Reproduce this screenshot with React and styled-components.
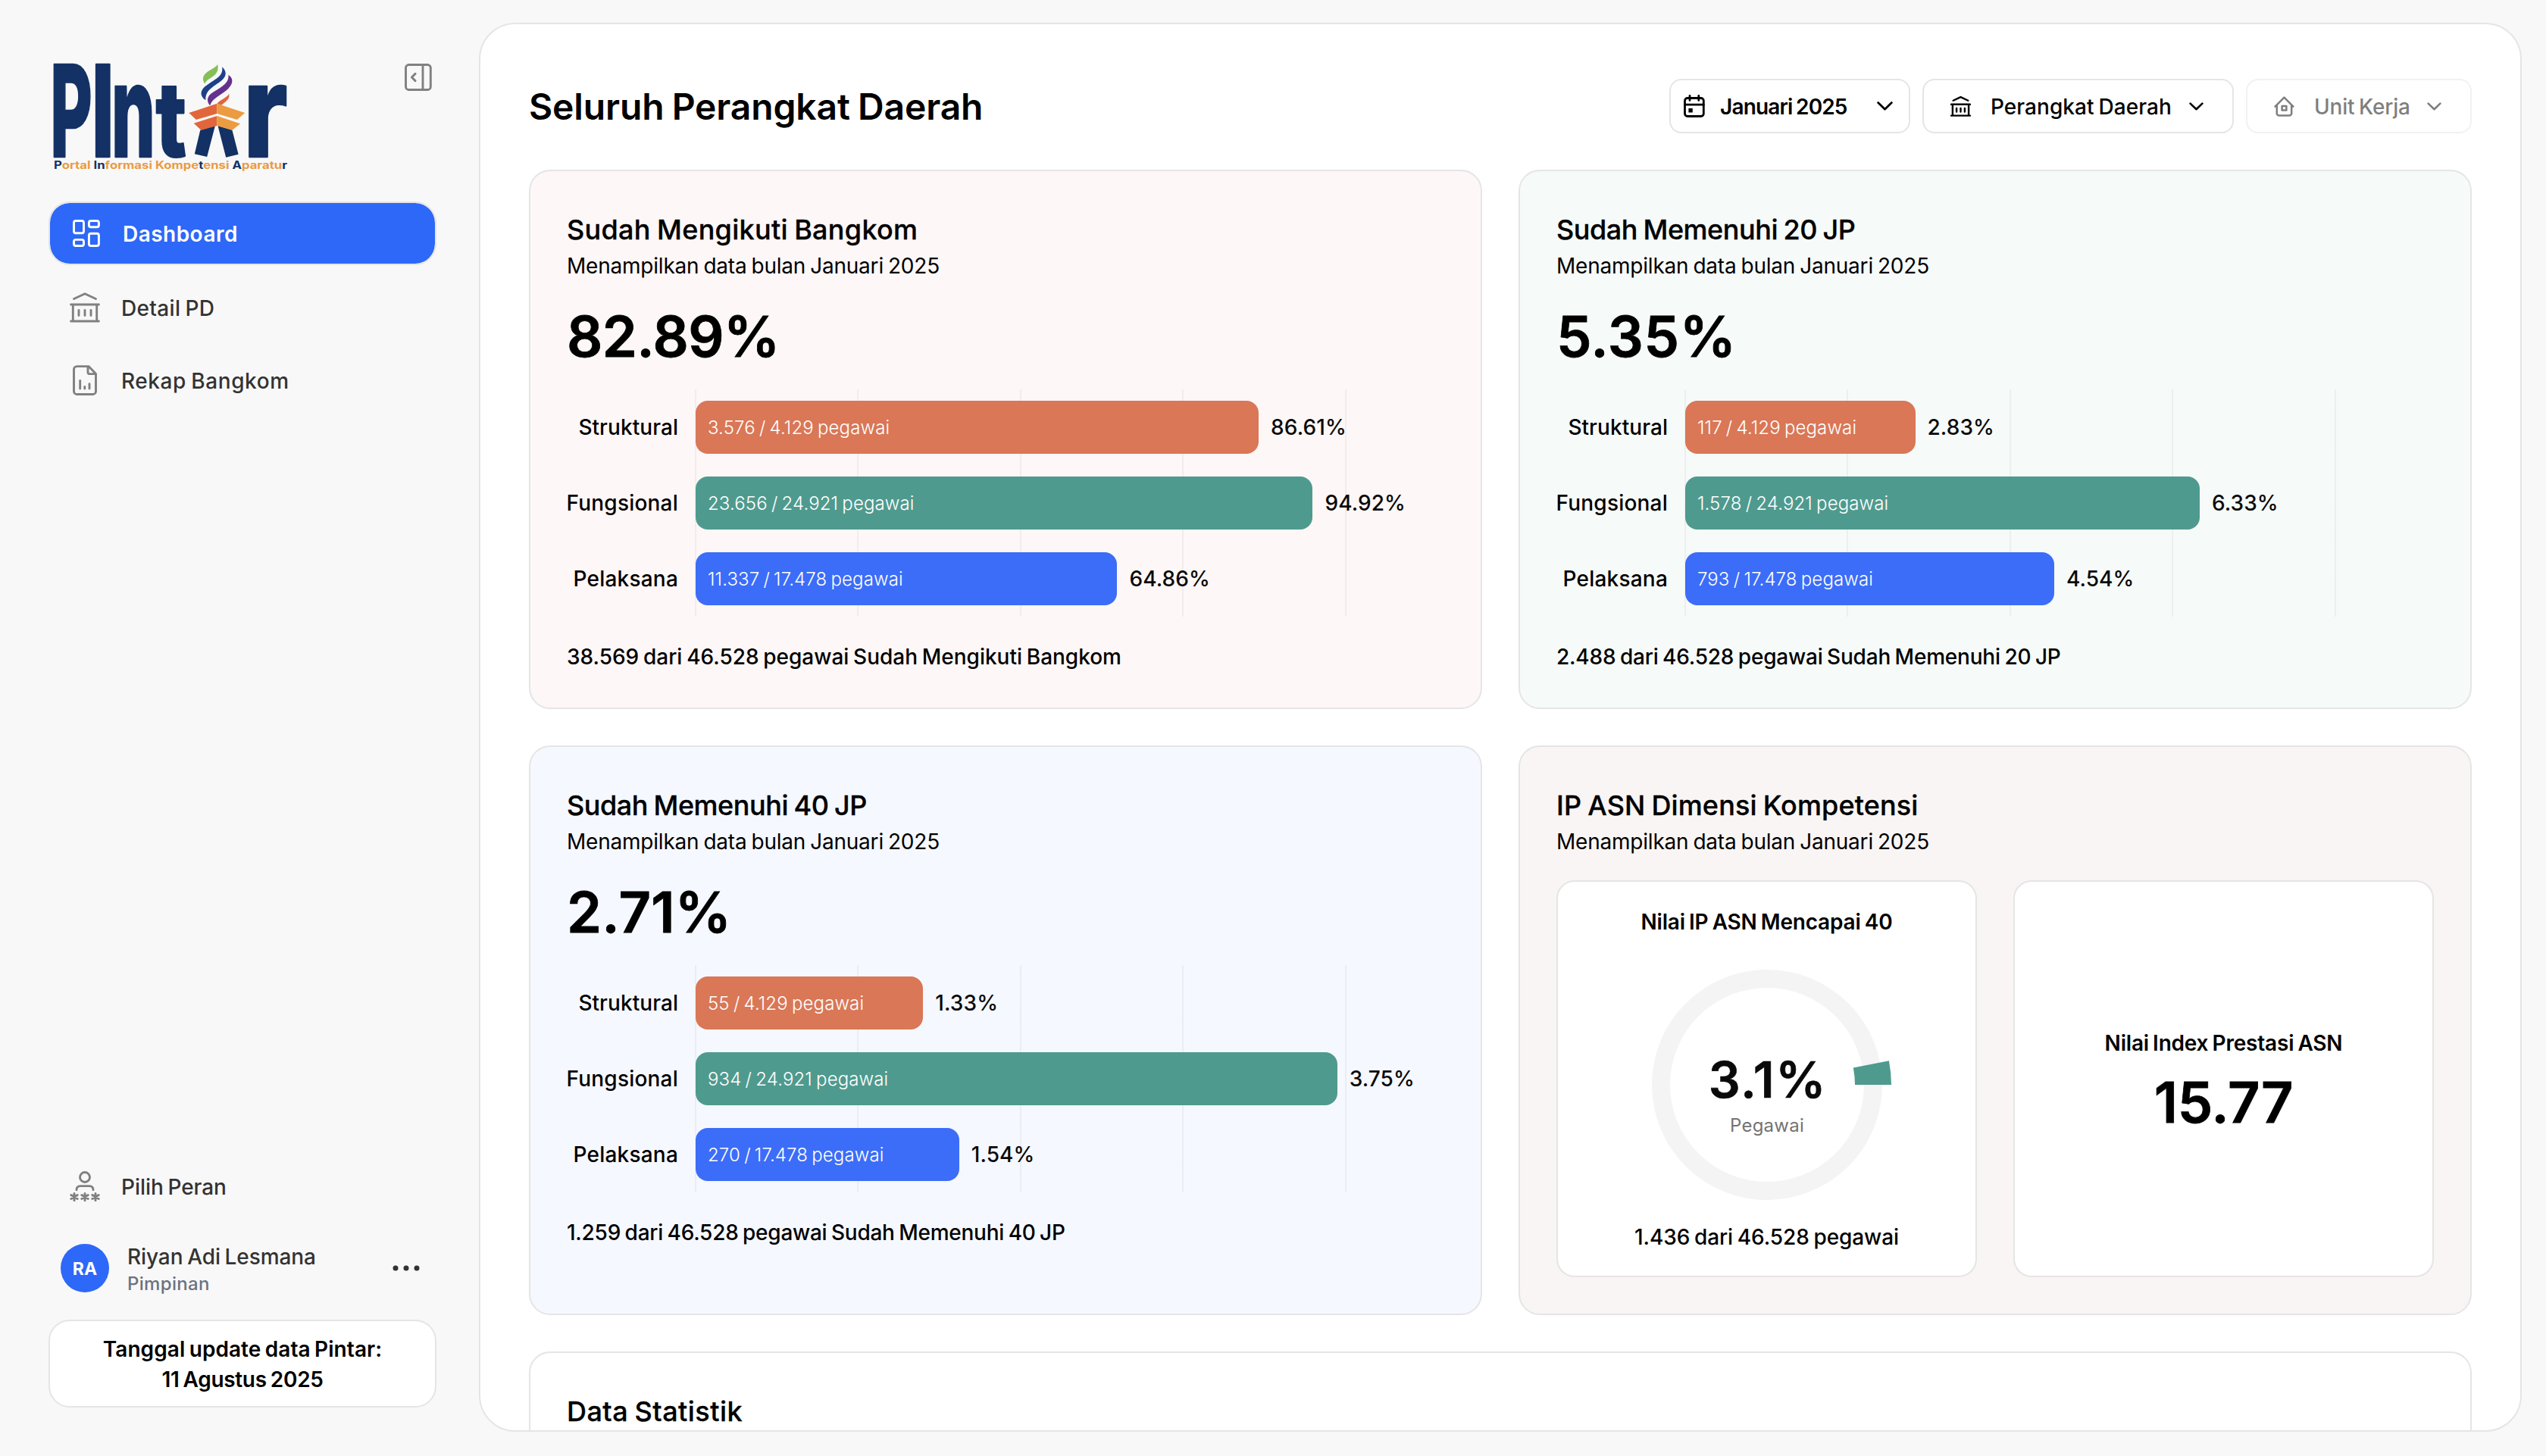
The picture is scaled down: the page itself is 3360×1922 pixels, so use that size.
import React from 'react';
import styled, { createGlobalStyle } from 'styled-components';

const GlobalStyle = createGlobalStyle`
  * { box-sizing: border-box; }
  body {
    margin: 0;
    background: #f8f8f8;
    color: #000;
    font-family: "Inter", "Liberation Sans", sans-serif;
    font-size: 28px;
    line-height: 40px;
    word-spacing: -0.06em;
    -webkit-font-smoothing: antialiased;
  }
`;

const line = '#e5e5e5';
const colors = { orange: '#d97757', green: '#4f9a8e', blue: '#3c6df8', primary: '#2d68f8' };

const Page = styled.div`
  display: flex;
  width: 3360px;
  height: 1922px;
  overflow: hidden;
  background: #f8f8f8;
`;

/* Sidebar */

const Sidebar = styled.aside`
  display: flex;
  flex-direction: column;
  width: 632px;
  flex: none;
  padding: 60px 56px 64px 64px;
`;

const Brand = styled.div`
  display: flex;
  justify-content: space-between;
  align-items: flex-start;
  height: 206px;
  padding-right: 6px;
`;

const CollapseButton = styled.button`
  display: flex;
  margin: 24px 0 0;
  padding: 0;
  border: 0;
  background: none;
  color: #808080;
`;

const Nav = styled.nav`
  display: flex;
  flex-direction: column;
  gap: 16px;
  flex: 1;
`;

const NavItem = styled.a`
  display: flex;
  align-items: center;
  gap: 28px;
  height: ${(p) => (p.$active ? 84 : 80)}px;
  padding: 0 28px;
  border-radius: 28px;
  border: ${(p) => (p.$active ? `2px solid ${line}` : '0')};
  background: ${(p) => (p.$active ? colors.primary : 'transparent')};
  background-clip: padding-box;
  color: ${(p) => (p.$active ? '#fff' : '#333')};
  font-weight: ${(p) => (p.$active ? 600 : 500)};
`;

const IconSlot = styled.span`
  display: flex;
  justify-content: center;
  width: 40px;
  color: ${(p) => (p.$active ? '#fff' : '#808080')};
`;

const Text = styled.span`
  white-space: nowrap;
  letter-spacing: ${(p) => p.$track || 0}em;
`;

const NavLabel = styled(Text)`
  padding-top: 2px;
`;

const UserRow = styled.div`
  display: flex;
  align-items: center;
  height: 64px;
  margin: 36px 0;
  padding: 0 22px 0 16px;
  color: #333;
`;

const Avatar = styled.div`
  display: flex;
  align-items: center;
  justify-content: center;
  width: 64px;
  height: 64px;
  padding-top: 2px;
  border-radius: 50%;
  background: ${colors.primary};
  color: #fff;
  font-size: 23px;
  font-weight: 700;
`;

const UserInfo = styled.div`
  display: flex;
  flex-direction: column;
  flex: 1;
  padding: 6px 0 0 24px;
  line-height: 36px;
  font-weight: 500;
`;

const Role = styled(Text)`
  font-size: 24px;
  color: #6b7280;
`;

const UpdateBox = styled.div`
  display: flex;
  flex-direction: column;
  align-items: center;
  height: 116px;
  padding-top: 17px;
  border: 2px solid ${line};
  border-radius: 28px;
  background: #fff;
  font-weight: 600;
`;

/* Main panel */

const Main = styled.main`
  display: flex;
  flex-direction: column;
  flex: 1;
  gap: 48px;
  margin: 30px 32px 32px 0;
  padding: 72px 64px 0;
  border: 2px solid ${line};
  border-radius: 48px;
  background: #fff;
  overflow: hidden;
`;

const Header = styled.header`
  display: flex;
  align-items: center;
  justify-content: space-between;
  height: 72px;
  flex: none;
`;

const PageTitle = styled.h1`
  margin: 0;
  padding-top: 2px;
  font-size: 48px;
  line-height: 60px;
  font-weight: 600;
`;

const Filters = styled.div`
  display: flex;
  gap: 16px;
`;

const FilterButton = styled.button`
  display: flex;
  align-items: center;
  width: ${(p) => p.$width}px;
  height: 72px;
  padding: 0 ${(p) => p.$end}px 0 ${(p) => p.$start}px;
  border: 2px solid ${line};
  border-radius: 16px;
  background: #fff;
  color: #000;
  font: inherit;
  font-weight: ${(p) => p.$weight || 500};
  word-spacing: inherit;
  opacity: ${(p) => (p.disabled ? 0.5 : 1)};
`;

const FilterLabel = styled(Text)`
  flex: 1;
  text-align: left;
  padding: 1px 0 0 ${(p) => p.$gap}px;
`;

const CardGrid = styled.section`
  display: grid;
  grid-template-columns: 1fr 1fr;
  gap: 48px;
  flex: none;
`;

const Card = styled.article`
  display: flex;
  flex-direction: column;
  padding: 48px;
  border: 2px solid ${line};
  border-radius: 28px;
  background: ${(p) => p.$tint || '#fff'};
`;

const StatCard = styled(Card)`
  height: 300px;
  flex: none;
`;

const CardTitle = styled.h2`
  margin: 0;
  padding-top: 1px;
  font-size: 36px;
  line-height: 56px;
  font-weight: 500;
  -webkit-text-stroke: 0.3px #000;
`;

const BigValue = styled.div`
  margin: 28px 0 25px;
  font-size: 74px;
  line-height: 90px;
  font-weight: 600;
  -webkit-text-stroke: 0.8px #000;
`;

const Chart = styled.div`
  display: flex;
  flex-direction: column;
  margin-left: 169px;
  width: 862px;
  background: repeating-linear-gradient(90deg, rgba(0, 0, 0, 0.045) 0 2px, transparent 2px 214.5px);
`;

const ChartRow = styled.div`
  display: grid;
  grid-template-columns: 171px auto auto;
  justify-content: start;
  align-items: center;
  height: 100px;
  margin-left: -170px;
  font-weight: 500;
`;

const RowLabel = styled(Text)`
  text-align: right;
  padding-right: 23px;
`;

const Bar = styled.div`
  display: flex;
  align-items: center;
  height: 70px;
  padding: 1px 0 0 16px;
  border-radius: 16px;
  background: ${(p) => p.$color};
  color: #fff;
  font-size: 24px;
  font-weight: 300;
`;

const RowValue = styled(Text)`
  padding-left: 16px;
  color: #0a0a0a;
`;

const Footnote = styled.div`
  margin: 33px 0 -1px;
  font-weight: 500;
`;

const ScoreRow = styled.div`
  display: grid;
  grid-template-columns: 555px 555px;
  gap: 48px;
  margin-top: 31px;
`;

const ScoreCard = styled.div`
  display: flex;
  flex-direction: column;
  align-items: center;
  justify-content: ${(p) => (p.$centered ? 'center' : 'flex-start')};
  padding: ${(p) => (p.$centered ? '0' : '32px 0 31px')};
  border: 2px solid ${line};
  border-radius: 24px;
  background: #fff;
  font-weight: 500;
`;

const ScoreTitle = styled.h3`
  margin: 0;
  font-size: 28px;
  line-height: ${(p) => p.$height}px;
  font-weight: 600;
`;

const Score = styled.div`
  margin-top: 22px;
  font-size: 74px;
  line-height: 72px;
  font-weight: 600;
  -webkit-text-stroke: 0.8px #000;
`;

/* Icons */

const Icon = ({ w, h, stroke = 2.6, children }) => (
  <svg width={w} height={h} viewBox={`0 0 ${w} ${h}`} fill="none" stroke="currentColor"
    strokeWidth={stroke} strokeLinecap="round" strokeLinejoin="round">{children}</svg>
);

const CollapseIcon = () => (
  <Icon w={36} h={36} stroke={2.9}>
    <rect x="1.5" y="1.5" width="32.8" height="33" rx="4" />
    <path d="M24 1.4V34.8M14 13.4L9.4 18L14 22.6" />
  </Icon>
);

const GridIcon = () => (
  <Icon w={36} h={36} stroke={2.9}>
    <rect x="1.5" y="1.5" width="13" height="16.2" rx="2.5" />
    <rect x="21.4" y="1.5" width="13" height="8.2" rx="2.5" />
    <rect x="1.5" y="26.4" width="13" height="8.1" rx="2.5" />
    <rect x="21.4" y="18.2" width="13" height="16.3" rx="2.5" />
  </Icon>
);

const BankIcon = ({ size = 40, stroke = 2.9 }) => (
  <svg width={size} height={size} viewBox="0 0 40 40" fill="none" stroke="currentColor"
    strokeWidth={stroke} strokeLinecap="round" strokeLinejoin="round">
    <path d="M5.5 8.5L20 1.8L34.5 8.5M1.6 16H38.4M1.6 38H38.4M4.3 16V38M35.7 16V38M12 23.5V30.5M20 23.5V30.5M28 23.5V30.5" />
  </svg>
);

const FileChartIcon = () => (
  <Icon w={32} h={40} stroke={2.9}>
    <path d="M21 1.6H5.5a4 4 0 0 0-4 4V34.5a4 4 0 0 0 4 4H26.5a4 4 0 0 0 4-4V11.6ZM20 2V9.6a2 2 0 0 0 2 2H30M9.7 20.5V31M15.8 28.5V31M22 24.8V31" />
  </Icon>
);

const RoleIcon = () => (
  <Icon w={40} h={40} stroke={2.9}>
    <circle cx="20" cy="8" r="6.5" />
    <path d="M9 24.8C9 21.4 11 19.6 14 19.6H26C29 19.6 31 21.4 31 24.8" />
    {[6, 20, 34].map((x) => (
      <path key={x} d={`M${x} 29.4V38.8M${x - 4.2} 31.6L${x + 4.2} 36.6M${x + 4.2} 31.6L${x - 4.2} 36.6`} />
    ))}
  </Icon>
);

const DotsIcon = () => (
  <svg width="36" height="8" viewBox="0 0 36 8" fill="#333">
    <circle cx="4" cy="4" r="3.5" /><circle cx="18" cy="4" r="3.5" /><circle cx="32" cy="4" r="3.5" />
  </svg>
);

const CalendarIcon = () => (
  <Icon w={28} h={30} stroke={2.8}>
    <rect x="1.5" y="4.5" width="24.8" height="24" rx="3.5" />
    <path d="M1.5 13.2H26.3M8 1.4V7.4M19.8 1.4V7.4" />
    <path d="M6.4 18h5.4v5.6H6.4Z" fill="currentColor" stroke="none" />
  </Icon>
);

const HomeIcon = () => (
  <Icon w={27} h={27} stroke={2.5}>
    <path d="M1.6 13.6L13.5 1.6L25.4 13.6M3.8 11.6V22.6a3 3 0 0 0 3 3H20.2a3 3 0 0 0 3-3V11.6" />
    <rect x="10.6" y="13" width="5.8" height="5.4" />
  </Icon>
);

const ChevronIcon = ({ w, h, stroke }) => (
  <Icon w={w} h={h} stroke={stroke}>
    <path d={`M1.6 1.6L${w / 2} ${h - 1.8}L${w - 1.6} 1.6`} />
  </Icon>
);

const LogoLetter = ({ x, sx, sy, children }) => (
  <text transform={`translate(${x} 147) scale(${sx} ${sy})`} fontSize="100">{children}</text>
);

const Logo = () => (
  <svg width="330" height="176" viewBox="0 0 330 176">
    <g fill="#143165" stroke="#143165" strokeWidth="1.6" strokeLinejoin="round" fontFamily="Inter, sans-serif" fontWeight="800">
      <LogoLetter x={2.4} sx={0.846} sy={1.68}>P</LogoLetter>
      <LogoLetter x={56.7} sx={1.05} sy={1.68}>I</LogoLetter>
      <LogoLetter x={83.1} sx={0.91} sy={1.7}>n</LogoLetter>
      <LogoLetter x={141.4} sx={1.06} sy={1.37}>t</LogoLetter>
      <LogoLetter x={257.5} sx={1.38} sy={1.7}>r</LogoLetter>
    </g>
    <g transform="translate(-24 0) scale(0.35714 0.33333)">
      <path fill="#143165" d="M628 335L683 318L653 441L607 430ZM693 318L746 335L769 431L723 443Z" />
      <path fill="#e2663b" d="M586 267L690 230V270L613 294ZM604 308L690 279V318L631 335Z" />
      <path fill="#eb9b41" d="M690 230L793 267L764 294L690 270ZM690 279L776 310L746 335L690 318Z" />
      <path fill="#86bf57" d="M692 74C697 100 690 112 665 130C652 139 647 145 645 152C634 135 636 118 655 104C675 90 688 84 692 74Z" />
      <path fill="#1d4189" d="M709 85C728 105 726 125 700 145C665 170 645 185 648 217C625 200 625 175 655 155C700 125 712 115 709 85Z" />
      <path fill="#63318d" d="M732 117C752 130 752 155 722 180C690 205 670 215 664 238C650 220 652 200 675 185C715 160 735 145 732 117Z" />
      <path fill="#e2663b" d="M734 191C738 210 728 218 706 236L690 230C700 215 730 205 734 191Z" />
    </g>
    <text x="7" y="163" textLength="308" lengthAdjust="spacingAndGlyphs" fontFamily="Inter, sans-serif" fontSize="14" fontWeight="700" fill="#eb9b41" wordSpacing="0">
      <tspan fill="#143165">P</tspan>ortal <tspan fill="#143165">In</tspan>formasi Kompe<tspan fill="#143165">t</tspan>ensi <tspan fill="#143165">A</tspan>paratu<tspan fill="#143165">r</tspan>
    </text>
  </svg>
);

/* Data */

const summaries = [
  {
    title: 'Sudah Mengikuti Bangkom', titleTrack: 0.0085, tint: '#fdf7f7', value: '82.89%', valueTrack: -0.0075,
    note: '38.569 dari 46.528 pegawai Sudah Mengikuti Bangkom', noteTrack: -0.0005, max: 100,
    rows: [[86.61, '3.576 / 4.129 pegawai'], [94.92, '23.656 / 24.921 pegawai'], [64.86, '11.337 / 17.478 pegawai']],
  },
  {
    title: 'Sudah Memenuhi 20 JP', titleTrack: -0.0125, tint: '#f6faf9', value: '5.35%', valueTrack: 0.0085,
    note: '2.488 dari 46.528 pegawai Sudah Memenuhi 20 JP', noteTrack: -0.0075, max: 8,
    rows: [[2.83, '117 / 4.129 pegawai'], [6.33, '1.578 / 24.921 pegawai'], [4.54, '793 / 17.478 pegawai']],
  },
  {
    title: 'Sudah Memenuhi 40 JP', titleTrack: -0.0125, tint: '#f5f8ff', value: '2.71%', valueTrack: 0.002,
    note: '1.259 dari 46.528 pegawai Sudah Memenuhi 40 JP', noteTrack: -0.009, max: 3.8,
    rows: [[1.33, '55 / 4.129 pegawai'], [3.75, '934 / 24.921 pegawai'], [1.54, '270 / 17.478 pegawai']],
  },
];

const groups = [
  { label: 'Struktural', track: 0.0023, color: colors.orange },
  { label: 'Fungsional', track: 0.0075, color: colors.green },
  { label: 'Pelaksana', track: 0.0075, color: colors.blue },
];

const Subtitle = () => <Text $track={-0.0075}>Menampilkan data bulan Januari 2025</Text>;

const SummaryCard = ({ item }) => (
  <Card $tint={item.tint}>
    <CardTitle><Text $track={item.titleTrack}>{item.title}</Text></CardTitle>
    <Subtitle />
    <BigValue><Text $track={item.valueTrack}>{item.value}</Text></BigValue>
    <Chart>
      {groups.map((g, i) => {
        const [percent, detail] = item.rows[i];
        return (
          <ChartRow key={g.label}>
            <RowLabel $track={g.track}>{g.label}</RowLabel>
            <Bar $color={g.color} style={{ width: (percent / item.max) * 858 }}>
              <Text $track={0.005}>{detail}</Text>
            </Bar>
            <RowValue $track={0.003}>{percent.toFixed(2)}%</RowValue>
          </ChartRow>
        );
      })}
    </Chart>
    <Footnote><Text $track={item.noteTrack}>{item.note}</Text></Footnote>
  </Card>
);

const Donut = ({ percent }) => {
  const a = (percent / 100) * Math.PI * 2;
  const cx = 200;
  const cy = 194;
  const pt = (r, t) => `${cx + r * Math.cos(t)} ${cy - r * Math.sin(t)}`;
  return (
    <svg width="399" height="375" viewBox="0 0 399 375">
      <circle cx={cx} cy={cy} r="140" fill="none" stroke="#f4f4f4" strokeWidth="24" />
      <path fill={colors.green} d={`M${pt(116, 0)}L${pt(164, 0)}A164 164 0 0 0 ${pt(164, a)}L${pt(116, a)}A116 116 0 0 1 ${pt(116, 0)}Z`} />
      <text x={cx + 1} y="211" textAnchor="middle" fontSize="66" fontWeight="600" letterSpacing="1.6" fill="#0a0a0a" stroke="#0a0a0a" strokeWidth="0.6">{percent}%</text>
      <text x={cx} y="256" textAnchor="middle" fontSize="24" fontWeight="400" letterSpacing="0.25" fill="#737373">Pegawai</text>
    </svg>
  );
};

export default function App() {
  return (
    <Page>
      <GlobalStyle />
      <Sidebar>
        <Brand>
          <Logo />
          <CollapseButton><CollapseIcon /></CollapseButton>
        </Brand>
        <Nav>
          <NavItem $active>
            <IconSlot $active><GridIcon /></IconSlot>
            <NavLabel $track={0.0165}>Dashboard</NavLabel>
          </NavItem>
          <NavItem>
            <IconSlot><BankIcon /></IconSlot>
            <NavLabel $track={0.012}>Detail PD</NavLabel>
          </NavItem>
          <NavItem>
            <IconSlot><FileChartIcon /></IconSlot>
            <NavLabel $track={0.0205}>Rekap Bangkom</NavLabel>
          </NavItem>
        </Nav>
        <NavItem>
          <IconSlot><RoleIcon /></IconSlot>
          <NavLabel $track={-0.002}>Pilih Peran</NavLabel>
        </NavItem>
        <UserRow>
          <Avatar>RA</Avatar>
          <UserInfo>
            <Text $track={-0.003}>Riyan Adi Lesmana</Text>
            <Role $track={0.0136}>Pimpinan</Role>
          </UserInfo>
          <DotsIcon />
        </UserRow>
        <UpdateBox>
          <Text $track={0.002}>Tanggal update data Pintar:</Text>
          <Text $track={-0.011}>11 Agustus 2025</Text>
        </UpdateBox>
      </Sidebar>
      <Main>
        <Header>
          <PageTitle><Text $track={-0.003}>Seluruh Perangkat Daerah</Text></PageTitle>
          <Filters>
            <FilterButton $width={318} $start={17} $end={21} $weight={600}>
              <CalendarIcon />
              <FilterLabel $track={-0.03} $gap={20}>Januari 2025</FilterLabel>
              <ChevronIcon w={21} h={12} stroke={2.8} />
            </FilterButton>
            <FilterButton $width={411} $start={35} $end={38}>
              <BankIcon size={27} stroke={3.6} />
              <FilterLabel $track={0.002} $gap={26}>Perangkat Daerah</FilterLabel>
              <ChevronIcon w={19} h={11} stroke={2.6} />
            </FilterButton>
            <FilterButton $width={298} $start={35} $end={38} disabled>
              <HomeIcon />
              <FilterLabel $track={-0.007} $gap={26}>Unit Kerja</FilterLabel>
              <ChevronIcon w={19} h={11} stroke={2.6} />
            </FilterButton>
          </Filters>
        </Header>
        <CardGrid>
          {summaries.map((s) => <SummaryCard key={s.title} item={s} />)}
          <Card $tint="#f9f5f4">
            <CardTitle><Text $track={0.0035}>IP ASN Dimensi Kompetensi</Text></CardTitle>
            <Subtitle />
            <ScoreRow>
              <ScoreCard>
                <ScoreTitle $height={42}><Text $track={-0.007}>Nilai IP ASN Mencapai 40</Text></ScoreTitle>
                <Donut percent={3.1} />
                <Text $track={-0.003}>1.436 dari 46.528 pegawai</Text>
              </ScoreCard>
              <ScoreCard $centered>
                <ScoreTitle $height={40}><Text $track={-0.007}>Nilai Index Prestasi ASN</Text></ScoreTitle>
                <Score><Text $track={-0.003}>15.77</Text></Score>
              </ScoreCard>
            </ScoreRow>
          </Card>
        </CardGrid>
        <StatCard>
          <CardTitle><Text $track={0.013}>Data Statistik</Text></CardTitle>
        </StatCard>
      </Main>
    </Page>
  );
}
